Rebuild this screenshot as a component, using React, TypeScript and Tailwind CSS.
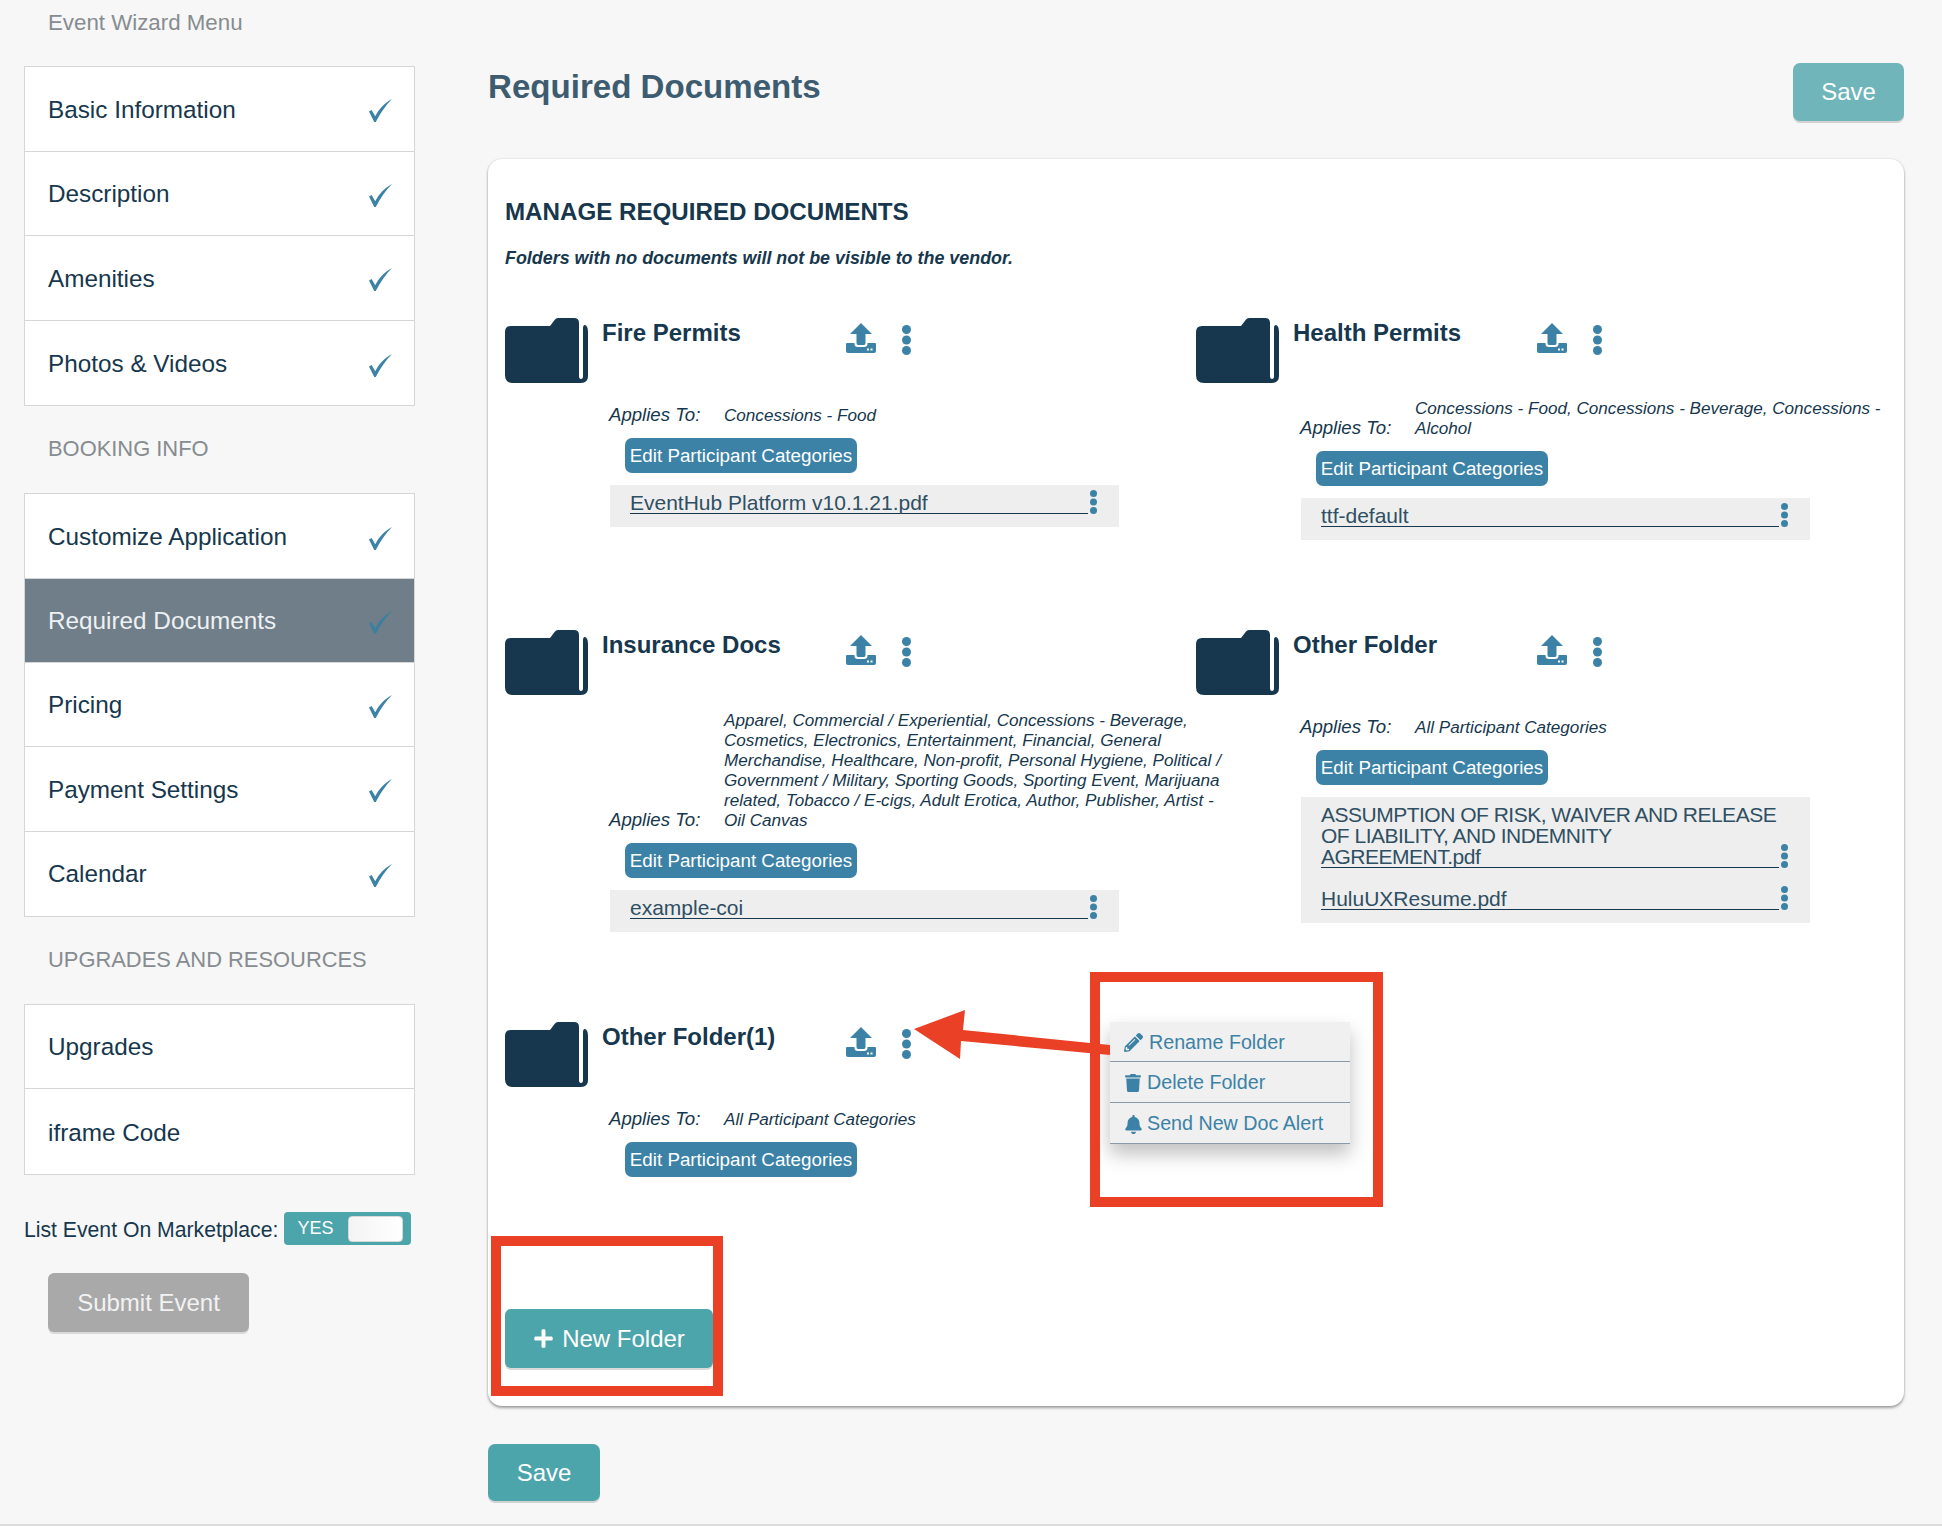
import { FaBell, FaPencilAlt, FaPlus, FaTrash } from "react-icons/fa";

const Check = ({ active }: { active?: boolean }) => (
  <svg width="23" height="23" viewBox="0 0 22 22" className={"mt-[2px] " + (active ? "text-[#3d7f9f]" : "text-[#3b82a6]")}>
    <path fill="currentColor" d="M0 12 L2.5 10.5 L6 16.5 C9 10.5 14 4.5 22 0 C16 6 10.5 14 6.5 22 L5 22 Z" />
  </svg>
);

const FolderIcon = () => (
  <svg width="83" height="65" viewBox="0 0 83 65" className="shrink-0 text-[#16374d]">
    <path
      fill="currentColor"
      d="M0 14 Q0 8 6 8 H45 L50 1.5 Q51 0 53 0 H69 Q74 0 74 5 V58 Q74 61 76 61 Q78 61 78 58 V10 Q78 7 80 7 Q83 8 83 14 V58 Q83 65 76 65 H8 Q0 65 0 57 Z"
    />
  </svg>
);

const UploadIcon = () => (
  <svg width="30" height="30" viewBox="0 0 30 30" className="mt-[5px] shrink-0 text-[#3b82a6]">
    <path fill="currentColor" d="M15 0 L26 11 H19.5 V20 Q19.5 22 18 22 H12 Q10.5 22 10.5 20 V11 H4 Z" />
    <path
      fill="currentColor"
      d="M0 21 Q0 20 1 20 H8.5 V21 Q8.5 24 12 24 H18 Q21.5 24 21.5 21 V20 H29 Q30 20 30 21 V28 Q30 30 28 30 H2 Q0 30 0 28 Z"
    />
    <rect x="21" y="25.5" width="2" height="2" fill="#fff" />
    <rect x="24.5" y="25.5" width="2" height="2" fill="#fff" />
  </svg>
);

const Dots = ({ small }: { small?: boolean }) =>
  small ? (
    <svg width="9" height="24" viewBox="0 0 9 24" className="block shrink-0 text-[#3b82a6]">
      <circle cx="4.5" cy="3.5" r="3.5" fill="currentColor" />
      <circle cx="4.5" cy="12" r="3.5" fill="currentColor" />
      <circle cx="4.5" cy="20.5" r="3.5" fill="currentColor" />
    </svg>
  ) : (
    <svg width="9" height="30" viewBox="0 0 9 30" className="mt-[7px] shrink-0 text-[#3b82a6]">
      <circle cx="4.5" cy="4.5" r="4.5" fill="currentColor" />
      <circle cx="4.5" cy="15" r="4.5" fill="currentColor" />
      <circle cx="4.5" cy="25.5" r="4.5" fill="currentColor" />
    </svg>
  );

const MenuBox = ({ items, tall }: { items: { label: string; active?: boolean; check?: boolean }[]; tall?: boolean }) => (
  <div className="w-[391px] border border-[#d6d6d6] bg-white">
    {items.map((item) => (
      <div
        key={item.label}
        className={
          "flex items-center justify-between border-b border-[#d6d6d6] pt-[2px] pl-[23px] pr-[22px] text-[24.3px] last:border-b-0 " +
          (tall ? "h-[84.6px] " : "h-[84.3px] ") +
          (item.active ? "bg-[#6f7e88] text-[#eef1f3]" : "text-[#16374d]")
        }
      >
        <span>{item.label}</span>
        {item.check !== false && <Check active={item.active} />}
      </div>
    ))}
  </div>
);

const SectionLabel = ({ children }: { children: string }) => (
  <div className="flex h-[87px] items-center pl-[24px] text-[21.9px] text-[#868c90]">{children}</div>
);

type FolderData = { name: string; applies: string; files: string[] };

const Folder = ({ name, applies, files }: FolderData) => (
  <div>
    <div className="flex items-start">
      <FolderIcon />
      <div className="ml-[14px] w-[244px] text-[24px] leading-[30px] font-bold text-[#16374d]">{name}</div>
      <UploadIcon />
      <div className="w-[26px]" />
      <Dots />
    </div>
    <div className="mt-[15px] ml-[104px] flex min-h-[30px] items-end text-[#16374d] italic">
      <div className="w-[115px] shrink-0 pb-[3px] text-[18.6px] leading-[20px]">Applies To:</div>
      <div className="w-[505px] shrink-0 translate-y-px pb-[3px] text-[17.1px] leading-[20px]">{applies}</div>
    </div>
    <button className="mt-[10px] ml-[120px] block h-[35px] w-[232px] rounded-[7px] bg-[#3b82a6] text-center text-[18.8px] leading-[36px] whitespace-nowrap text-white">
      Edit Participant Categories
    </button>
    {files.length > 0 && (
      <div className="mt-[12px] ml-[105px] flex w-[509px] flex-col gap-[20px] bg-[#eeeeee] pt-[7px] pr-[21px] pb-[13px] pl-[20px]">
        {files.map((f) => (
          <div key={f} className="flex items-end">
            <div
              className={
                "w-[459px] border-b border-[#16374d] text-[21px] leading-[21px] font-light whitespace-pre-line text-[#2f4f63] " +
                (f.startsWith("ASSUMPTION") ? "tracking-[-0.5px]" : "")
              }
            >
              {f}
            </div>
            <div className="-mt-[3px] ml-[1px]">
              <Dots small />
            </div>
          </div>
        ))}
      </div>
    )}
  </div>
);

const folders: FolderData[] = [
  { name: "Fire Permits", applies: "Concessions - Food", files: ["EventHub Platform v10.1.21.pdf"] },
  {
    name: "Health Permits",
    applies: "Concessions - Food, Concessions - Beverage, Concessions - Alcohol",
    files: ["ttf-default"],
  },
  {
    name: "Insurance Docs",
    applies:
      "Apparel, Commercial / Experiential, Concessions - Beverage, Cosmetics, Electronics, Entertainment, Financial, General Merchandise, Healthcare, Non-profit, Personal Hygiene, Political / Government / Military, Sporting Goods, Sporting Event, Marijuana related, Tobacco / E-cigs, Adult Erotica, Author, Publisher, Artist - Oil Canvas",
    files: ["example-coi"],
  },
  {
    name: "Other Folder",
    applies: "All Participant Categories",
    files: ["ASSUMPTION OF RISK, WAIVER AND RELEASE\nOF LIABILITY, AND INDEMNITY\nAGREEMENT.pdf", "HuluUXResume.pdf"],
  },
  { name: "Other Folder(1)", applies: "All Participant Categories", files: [] },
];

export default function App() {
  return (
    <div className="relative h-[1526px] w-[1942px] overflow-hidden border-b-2 border-[#dcdcdc] bg-[#f7f7f7] font-['Liberation_Sans',Arial,sans-serif]">
      <div className="flex">
        {/* sidebar */}
        <aside className="ml-[24px] w-[391px] shrink-0">
          <div className="h-[66px] pt-[8px] pl-[24px] text-[22.3px] leading-[30px] text-[#868c90]">Event Wizard Menu</div>
          <MenuBox
            tall
            items={[
              { label: "Basic Information" },
              { label: "Description" },
              { label: "Amenities" },
              { label: "Photos & Videos" },
            ]}
          />
          <SectionLabel>BOOKING INFO</SectionLabel>
          <MenuBox
            items={[
              { label: "Customize Application" },
              { label: "Required Documents", active: true },
              { label: "Pricing" },
              { label: "Payment Settings" },
              { label: "Calendar" },
            ]}
          />
          <SectionLabel>UPGRADES AND RESOURCES</SectionLabel>
          <MenuBox
            tall
            items={[
              { label: "Upgrades", check: false },
              { label: "iframe Code", check: false },
            ]}
          />
          <div className="mt-[37px] flex h-[33px] items-center">
            <span className="pt-[2px] text-[21.2px] leading-[26px] text-[#16374d]">List Event On Marketplace:</span>
            <div className="ml-[6px] flex h-[33px] w-[127px] items-center rounded-[4px] bg-[#4ca5ab] pl-[13px] text-[18px] text-white">
              YES
              <div className="ml-[15px] h-[26px] w-[55px] rounded-[4px] border border-[#d8d8d8] bg-gradient-to-r from-[#f4f4f4] to-white" />
            </div>
          </div>
          <button className="mt-[28px] ml-[24px] block h-[59px] w-[201px] rounded-[6px] bg-[#a9a9a9] text-[24px] text-[#f2f2f2] shadow-[0_2px_0_rgba(0,0,0,0.12)]">
            Submit Event
          </button>
        </aside>

        {/* main */}
        <main className="ml-[73px] w-[1416px] shrink-0">
          <div className="flex h-[121px] items-start justify-between">
            <h1 className="pt-[65px] text-[33.1px] leading-[44px] font-bold text-[#3e5c70]">Required Documents</h1>
            <button className="mt-[63px] h-[58px] w-[111px] rounded-[7px] bg-[#6fb5b9] text-[24px] text-white shadow-[0_2px_0_rgba(0,0,0,0.15)]">
              Save
            </button>
          </div>

          <section className="relative mt-[38px] h-[1247px] rounded-[14px] bg-white pt-[38px] pl-[17px] shadow-[0_2px_3px_rgba(0,0,0,0.35),0_0_2px_rgba(0,0,0,0.15)]">
            <h2 className="text-[24.15px] leading-[30px] font-bold text-[#16374d]">MANAGE REQUIRED DOCUMENTS</h2>
            <p className="mt-[19px] text-[17.9px] leading-[24px] font-bold text-[#16374d] italic">
              Folders with no documents will not be visible to the vendor.
            </p>

            <div className="mt-[48px] grid grid-cols-[691px_691px] gap-y-[90px]">
              {folders.map((f) => (
                <Folder key={f.name} {...f} />
              ))}
            </div>

            <button className="mt-[132px] flex h-[59px] w-[208px] items-center justify-center gap-[8px] rounded-[6px] bg-[#4ca5ab] text-[24px] text-white shadow-[0_2px_0_rgba(0,0,0,0.15)]">
              <FaPlus className="text-[21px]" />
              New Folder
            </button>

            {/* folder menu */}
            <div className="absolute top-[863px] left-[622px] w-[240px] bg-[#f0f0f0] text-[19.7px] text-[#3b82a6] shadow-[0_10px_18px_rgba(0,0,0,0.25)]">
              <div className="flex h-[40px] items-center gap-[6px] border-b border-[#8a9aa8] pt-[2px] pl-[14px]">
                <FaPencilAlt className="text-[19px]" />
                Rename Folder
              </div>
              <div className="flex h-[41px] items-center gap-[5px] border-b border-[#8a9aa8] pt-[2px] pl-[14px]">
                <FaTrash className="text-[18px]" />
                Delete Folder
              </div>
              <div className="flex h-[41px] items-center gap-[4px] border-b border-[#8a9aa8] pt-[2px] pl-[14px]">
                <FaBell className="text-[19px]" />
                Send New Doc Alert
              </div>
            </div>

            {/* annotations */}
            <div className="absolute top-[813px] left-[602px] h-[235px] w-[293px] border-[10px] border-[#ea4026]" />
            <div className="absolute top-[1077px] left-[3px] h-[160px] w-[232px] border-[10px] border-[#ea4026]" />
            <svg className="absolute top-[850px] left-[426px]" width="200" height="60" viewBox="0 0 200 60">
              <path fill="#ea4026" d="M0 20 L51 1 L49 21 L196 36 L196 46 L47 32 L46 50 Z" />
            </svg>
          </section>

          <button className="mt-[38px] h-[57px] w-[112px] rounded-[7px] bg-[#4ca5ab] text-[24px] text-white shadow-[0_2px_0_rgba(0,0,0,0.15)]">
            Save
          </button>
        </main>
      </div>
    </div>
  );
}
